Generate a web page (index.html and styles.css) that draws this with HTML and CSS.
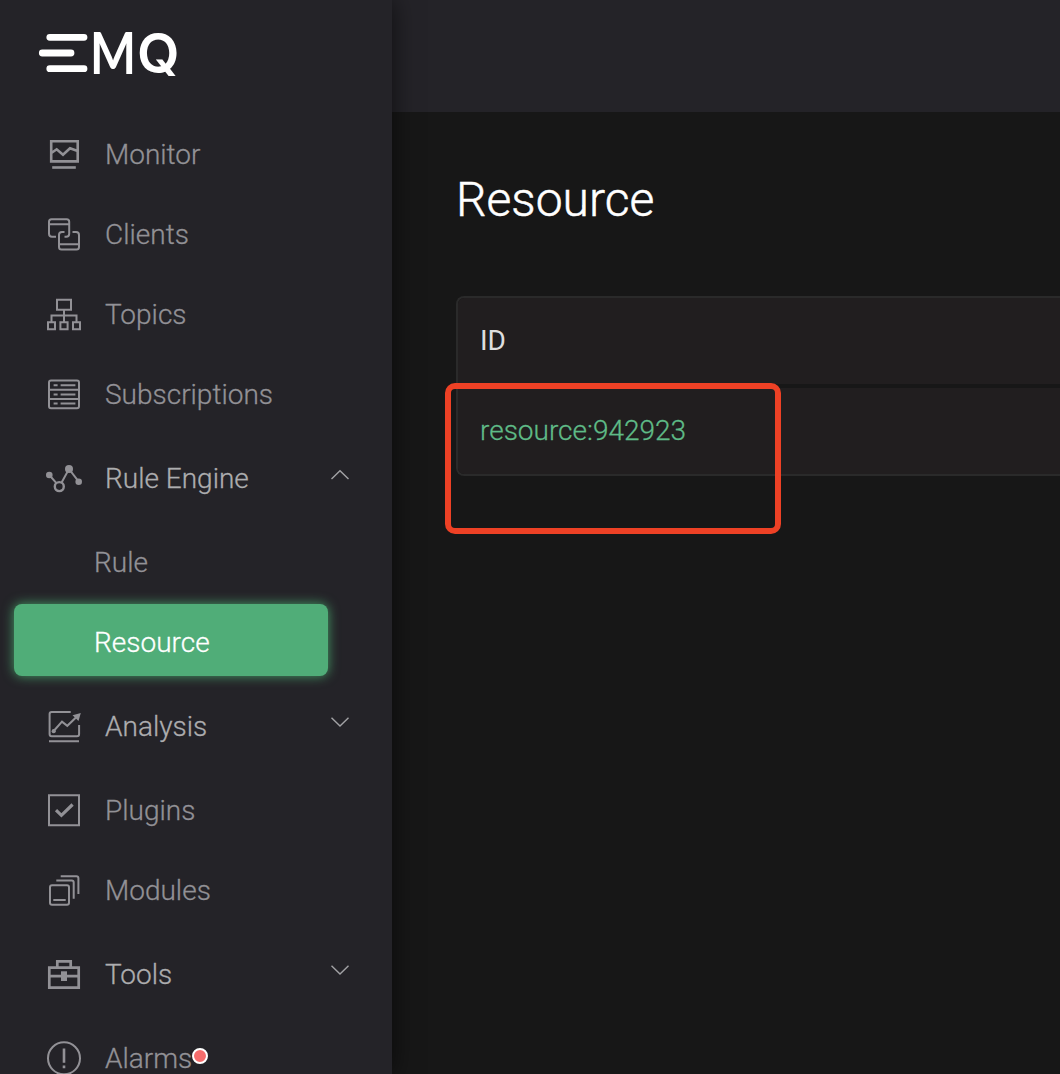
FILE: index.html
```html
<!DOCTYPE html>
<html lang="en">
<head>
<meta charset="utf-8">
<title>EMQ - Resource</title>
<link rel="stylesheet" href="styles.css">
</head>
<body>
<div class="app">
  <aside class="sidebar">
    <div class="logo">
      <svg width="150" height="90" viewBox="34 10 150 90" role="img" aria-label="EMQ">
        <g stroke="#fff" stroke-width="6.8" stroke-linecap="round">
          <path d="M49.8 37.3H84M42.3 53H71M49.8 68.7H84"/>
        </g>
        <text class="logo-text" x="90" y="73.8" textLength="46" lengthAdjust="spacingAndGlyphs">M</text>
        <text class="logo-text q" x="137" y="72.6" textLength="42.5" lengthAdjust="spacingAndGlyphs">Q</text>
      </svg>
    </div>
    <nav class="menu">
      <a class="item"><svg class="icon" viewBox="0 0 36 36"><g stroke-width="2.6"><path d="M5.2 5.3H31.7V25.4H5.2zM5 17.3L10.7 13.3L17 18.7L24 12.2L31 14.7"/><path d="M6.2 31.5H29.8"/></g></svg><span>Monitor</span></a>
      <a class="item"><svg class="icon" viewBox="0 0 36 36"><path d="M10 20.7H6Q3 20.7 3 17.7V5.8Q3 3.3 5.5 3.3H20.7Q23.2 3.3 23.2 5.8V17.7Q23.2 20.7 20.2 20.7H18.5M3 8.3H23.2M18.5 15.9H16Q13 15.9 13 18.9V30.9Q13 33.4 15.5 33.4H30.5Q33 33.4 33 30.9V18.9Q33 15.9 30 15.9H26.5M13 28.2H33"/></svg><span>Clients</span></a>
      <a class="item"><svg class="icon" viewBox="0 0 36 36"><path d="M11 3.7H25V13.7H11zM18 13.7V26M5.5 26V19.4H30.5V26M2 26.2H9V33.3H2zM14.4 26.2H21.6V33.3H14.4zM27 26.2H34V33.3H27z"/></svg><span>Topics</span></a>
      <a class="item"><svg class="icon" viewBox="0 0 36 36"><rect x="3" y="4.6" width="30" height="27.6" rx="2"/><path d="M3 13.8H33M3 23H33M7.6 9.2H11.6M14.6 9.2H29.4M7.6 18.4H11.6M14.6 18.4H29.4M7.6 27.6H11.6M14.6 27.6H29.4"/></svg><span>Subscriptions</span></a>
      <a class="item group"><svg class="icon" viewBox="0 0 36 36"><path d="M3.3 15L10.2 22.8M15.6 22.4L23 9L32.7 21.7"/><circle cx="13.3" cy="26.6" r="4.5" stroke-width="2.4"/><g class="solid"><circle cx="3.3" cy="15" r="3.3"/><circle cx="23" cy="9" r="4"/><circle cx="32.7" cy="21.7" r="3.3"/></g></svg><span>Rule Engine</span><svg class="chevron up" viewBox="0 0 20 12"><path d="M1.5 10L10 1.7L18.5 10"/></svg></a>
      <a class="item sub"><span>Rule</span></a>
      <a class="item sub active"><span>Resource</span></a>
      <a class="item group"><svg class="icon" viewBox="0 0 36 36"><path d="M24.7 4H5.7Q3.6 4 3.6 6V26Q3.6 28.2 5.7 28.2H31Q33.1 28.2 33.1 26V17M3 33.2H33M7.7 23L16 13.6L21.3 17.8L31 8.5"/><g class="solid"><circle cx="7.7" cy="23.2" r="2.1"/><path d="M34.8 5L26.5 7.3L32.5 13z"/></g></svg><span>Analysis</span><svg class="chevron" viewBox="0 0 20 12"><path d="M1.5 1.7L10 10L18.5 1.7"/></svg></a>
      <a class="item"><svg class="icon" viewBox="0 0 36 36"><path d="M3 3.3H33V33.3H3z"/><path stroke-width="3.2" d="M10 18.2L15.4 23.3L26.6 12.5"/></svg><span>Plugins</span></a>
      <a class="item"><svg class="icon" viewBox="0 0 36 36"><rect x="4" y="13.3" width="19" height="19.4" rx="2"/><path d="M7.3 28H19.7M10.3 8.6H25.7Q27.7 8.6 27.7 10.6V26.7M14.7 4.3H30.4Q32.4 4.3 32.4 6.3V22"/></svg><span>Modules</span></a>
      <a class="item group"><svg class="icon" viewBox="0 0 36 36"><path stroke-width="2.7" d="M3.3 11.7H32.7V31.7H3.3zM11.3 11V5.4H24.7V11M3.3 20.2H32.7"/><rect class="solid" x="15" y="15.3" width="6" height="9.7"/></svg><span>Tools</span><svg class="chevron" viewBox="0 0 20 12"><path d="M1.5 1.7L10 10L18.5 1.7"/></svg></a>
      <a class="item"><svg class="icon" viewBox="0 0 36 36"><circle cx="18" cy="18.3" r="16"/><path stroke-width="2.6" d="M18 8.5V22.8M18 25.6V28.3"/></svg><span class="alarm">Alarms<i class="badge"></i></span></a>
    </nav>
  </aside>
  <div class="main">
    <header class="topbar"></header>
    <main class="content">
      <h1>Resource</h1>
      <div class="table">
        <div class="row head">ID</div>
        <div class="row"><a>resource:942923</a></div>
        <div class="highlight"></div>
      </div>
    </main>
  </div>
</div>
</body>
</html>
```
FILE: styles.css
```css
* { box-sizing: border-box; }
body {
  margin: 0;
  background: #171717;
  font-family: Roboto, "Liberation Sans", sans-serif;
  font-size: 28px;
  font-weight: 300;
  -webkit-text-stroke: .3px;
}
.app { display: flex; height: 1074px; overflow: hidden; }
.sidebar {
  flex: none;
  width: 392px;
  background: #242328;
  box-shadow: 0 0 24px rgba(0, 0, 0, .6);
  z-index: 1;
}
.logo { height: 114px; padding: 10px 0 0 34px; }
.logo svg { display: block; }
.logo-text { font-family: Lato, sans-serif; font-weight: 700; font-size: 57.5px; fill: #fff; -webkit-text-stroke: 0; }
.logo-text.q { font-family: Inter, sans-serif; font-weight: 600; font-size: 54.5px; }
.menu { display: flex; flex-direction: column; }
.item {
  display: flex;
  align-items: center;
  flex: none;
  height: 80px;
  padding: 0 42px 0 46px;
  color: #929196;
  line-height: 40px;
}
.item > span { padding-top: 1px; }
.item.group { height: 88px; color: #adadaf; }
.icon {
  flex: none;
  width: 36px;
  height: 36px;
  margin-right: 23px;
  fill: none;
  stroke: #929196;
  stroke-width: 2;
  stroke-linecap: butt;
}
.solid { fill: #929196; stroke: none; }
.chevron {
  width: 20px;
  height: 12px;
  margin: 0 0 9px auto;
  fill: none;
  stroke: #a2a2a5;
  stroke-width: 1.4;
}
.chevron.up { margin-bottom: 7px; }
.item.sub { padding-left: 94px; }
.item.active {
  height: 72px;
  width: 314px;
  margin: 2px 0 6px 14px;
  padding: 4px 0 0 80px;
  border-radius: 8px;
  background: #50ad78;
  box-shadow: 0 0 12px rgba(80, 190, 120, .8);
  color: #fff;
}
.alarm { position: relative; }
.badge {
  position: absolute;
  left: 87px;
  top: 10px;
  width: 16px;
  height: 16px;
  border: 2px solid #fff;
  border-radius: 50%;
  background: #f56c6c;
}
.main { flex: 1; min-width: 0; }
.topbar { height: 112px; background: #242328; }
.content { padding: 60px 0 0 64px; }
h1 { margin: 0; color: #fff; font-size: 48px; line-height: 56px; font-weight: 300; -webkit-text-stroke: .5px; }
.table {
  position: relative;
  display: flex;
  flex-direction: column;
  gap: 4px;
  height: 180px;
  margin-top: 68px;
  border: 2px solid #2a2a2a;
  border-right: 0;
  border-radius: 8px 0 0 8px;
  background: #171717;
}
.row {
  flex: 1;
  display: flex;
  align-items: center;
  padding: 0 22px 2px;
  background: #211e1f;
  border-radius: 0 0 0 6px;
  color: #5fbb87;
}
.row.head { border-radius: 6px 0 0; color: #dedede; font-weight: 400; -webkit-text-stroke: 0; }
.highlight {
  position: absolute;
  left: -13px;
  top: 85px;
  width: 336px;
  height: 151px;
  border: 6px solid #ee4125;
  border-radius: 10px;
}
```
